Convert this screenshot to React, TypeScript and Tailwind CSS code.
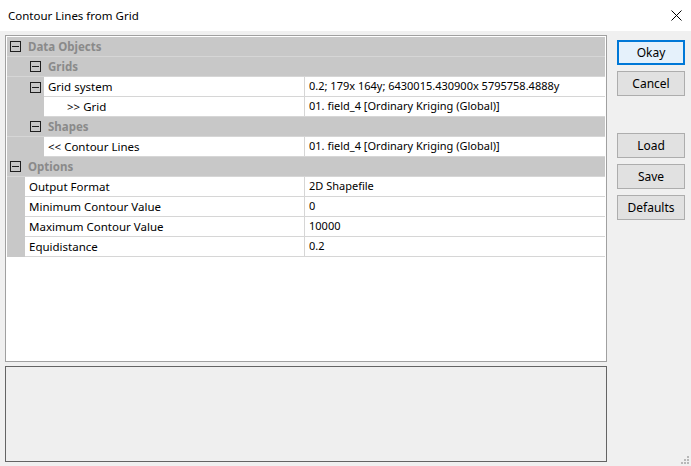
const FONT = { fontFamily: '"Segoe UI", "Noto Sans", "Open Sans", sans-serif' };

type Row =
  | { kind: "group"; label: string; indent: number }
  | { kind: "item"; label: string; value: string; gutter: number; textPad: number; box?: boolean };

const ROWS: Row[] = [
  { kind: "group", label: "Data Objects", indent: 0 },
  { kind: "group", label: "Grids", indent: 1 },
  { kind: "item", label: "Grid system", value: "0.2; 179x 164y; 6430015.430900x 5795758.4888y", gutter: 37, textPad: 4, box: true },
  { kind: "item", label: ">> Grid", value: "01. field_4 [Ordinary Kriging (Global)]", gutter: 37, textPad: 23 },
  { kind: "group", label: "Shapes", indent: 1 },
  { kind: "item", label: "<< Contour Lines", value: "01. field_4 [Ordinary Kriging (Global)]", gutter: 37, textPad: 4 },
  { kind: "group", label: "Options", indent: 0 },
  { kind: "item", label: "Output Format", value: "2D Shapefile", gutter: 18, textPad: 4 },
  { kind: "item", label: "Minimum Contour Value", value: "0", gutter: 18, textPad: 4 },
  { kind: "item", label: "Maximum Contour Value", value: "10000", gutter: 18, textPad: 4 },
  { kind: "item", label: "Equidistance", value: "0.2", gutter: 18, textPad: 4 },
];

function MinusBox() {
  return (
    <span className="w-[11px] h-[11px] border border-[#1e1e1e] flex items-center justify-center shrink-0">
      <span className="w-[7px] h-px bg-[#1e1e1e]" />
    </span>
  );
}

function DialogButton({ label, primary }: { label: string; primary?: boolean }) {
  return (
    <button
      className={`w-[68px] h-[25px] text-[12px] text-black border ${
        primary ? "border-[#0078d7] bg-[#e5f1fb] border-2" : "border-[#adadad] bg-[#e1e1e1]"
      }`}
    >
      {label}
    </button>
  );
}

export default function App() {
  return (
    <div className="w-[691px] h-[466px] bg-[#f0f0f0] flex flex-col overflow-hidden relative" style={FONT}>
      {/* title bar */}
      <div className="h-[31px] bg-white flex items-center justify-between shrink-0">
        <span className="pl-[8px] text-[11.5px] text-black">Contour Lines from Grid</span>
        <svg className="mr-[9px]" width="11" height="11" viewBox="0 0 11 11">
          <path d="M0.5 0.5 L10.5 10.5 M10.5 0.5 L0.5 10.5" stroke="#000" strokeWidth="1" />
        </svg>
      </div>

      <div className="flex flex-1 pt-[4px]">
        {/* left side */}
        <div className="flex flex-col w-[602px] ml-[5px]">
          <div className="h-[327px] bg-white border border-[#a0a0a0] p-px">
            {ROWS.map((r, i) =>
              r.kind === "group" ? (
                <div
                  key={i}
                  className="h-[20px] bg-[#c8c8c8] flex items-center border-b border-[#d6d6d6]"
                  style={{ paddingLeft: 3 + r.indent * 20 }}
                >
                  <MinusBox />
                  <span className="ml-[7px] text-[11.5px] font-bold text-[#8a8a8a]">{r.label}</span>
                </div>
              ) : (
                <div key={i} className="h-[20px] flex">
                  <div className="bg-[#c8c8c8] flex items-center shrink-0" style={{ width: r.gutter }}>
                    {r.box && (
                      <span className="ml-[23px]">
                        <MinusBox />
                      </span>
                    )}
                  </div>
                  <div
                    className="shrink-0 flex items-center border-b border-r border-[#d6d6d6]"
                    style={{ width: 298 - r.gutter, paddingLeft: r.textPad }}
                  >
                    <span className="text-[11.5px] text-black whitespace-nowrap">{r.label}</span>
                  </div>
                  <div className="flex-1 flex items-center pl-[4px] border-b border-[#d6d6d6]">
                    <span className="text-[11px] text-black whitespace-nowrap">{r.value}</span>
                  </div>
                </div>
              )
            )}
          </div>
          <div className="h-[4px]" />
          <div className="h-[96px] bg-[#efefef] border border-[#646464]" />
        </div>

        {/* buttons */}
        <div className="flex flex-col ml-[10px] pt-[5px]">
          <DialogButton label="Okay" primary />
          <div className="h-[6px]" />
          <DialogButton label="Cancel" />
          <div className="h-[37px]" />
          <DialogButton label="Load" />
          <div className="h-[6px]" />
          <DialogButton label="Save" />
          <div className="h-[6px]" />
          <DialogButton label="Defaults" />
        </div>
      </div>

      {/* resize grip */}
      <svg className="absolute right-[1px] bottom-[1px]" width="10" height="10" viewBox="0 0 10 10">
        <rect x="7" y="1" width="2" height="2" fill="#b8b8b8" />
        <rect x="4" y="4" width="2" height="2" fill="#b8b8b8" />
        <rect x="7" y="4" width="2" height="2" fill="#b8b8b8" />
        <rect x="1" y="7" width="2" height="2" fill="#b8b8b8" />
        <rect x="4" y="7" width="2" height="2" fill="#b8b8b8" />
        <rect x="7" y="7" width="2" height="2" fill="#b8b8b8" />
      </svg>
    </div>
  );
}
